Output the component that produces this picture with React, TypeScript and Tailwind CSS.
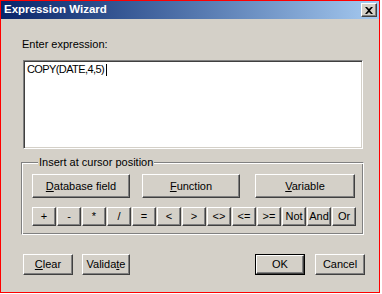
import React from 'react';

const font = { fontFamily: '"Liberation Sans", Arial, sans-serif' };

const bevel =
  'bg-[#d4d0c8] border border-t-white border-l-white border-r-[#404040] border-b-[#404040] shadow-[inset_-1px_-1px_0_#808080] text-black text-[11px] leading-none flex items-center justify-center';

const Btn: React.FC<{ className?: string; children: React.ReactNode }> = ({ className = '', children }) => (
  <div className={`${bevel} ${className}`}>{children}</div>
);

const OPS = ['+', '-', '*', '/', '=', '<', '>', '<>', '<=', '>=', 'Not', 'And', 'Or'];

export default function App() {
  return (
    <div className="w-[382px] h-[294px] bg-white" style={font}>
      <div className="w-[380px] h-[293px] border border-[#ff0000] bg-[#d4d0c8] flex flex-col">
        {/* title bar */}
        <div className="h-[18px] flex items-center justify-between bg-gradient-to-r from-[#0a246a] to-[#a6caf0] pl-[3px] pr-[2px]">
          <span className="text-white font-bold text-[11.5px] leading-none">Expression Wizard</span>
          <div className={`${bevel} w-[16px] h-[14px]`}>
            <svg width="8" height="7" viewBox="0 0 8 7">
              <path d="M0 0h2l2 2 2-2h2L5 3.5 8 7H6L4 5 2 7H0l3-3.5z" fill="black" />
            </svg>
          </div>
        </div>

        <div className="flex flex-col pl-[20px] pt-[19px]">
          <div className="ml-[1px] h-[13px] text-[11px] leading-[13px]">Enter expression:</div>

          <div className="ml-[2px] mt-[9px] w-[340px] h-[89px] bg-white border border-t-[#808080] border-l-[#808080] border-r-white border-b-white shadow-[inset_1px_1px_0_#404040,inset_-1px_-1px_0_#d4d0c8] px-[3px] pt-[2px]">
            <div className="flex items-center h-[13px] text-[11px] leading-[13px] tracking-[-0.6px]">
              COPY(DATE,4,5)
              <span className="ml-[2px] h-[12px] border-l border-black" />
            </div>
          </div>

          <fieldset className="mt-[7px] w-[343px] border border-t-[#808080] border-l-[#808080] border-r-white border-b-white shadow-[inset_1px_1px_0_white,inset_-1px_-1px_0_#808080] pl-[10px] pt-[5px] pb-[8px]">
            <legend className="ml-[6px] px-[1px] bg-[#d4d0c8] text-[11px] leading-[13px]">Insert at cursor position</legend>
            <div className="flex">
              <Btn className="w-[98px] h-[24px]"><span><u>D</u>atabase field</span></Btn>
              <Btn className="ml-[12px] w-[98px] h-[24px]"><span><u>F</u>unction</span></Btn>
              <Btn className="ml-[15px] w-[100px] h-[24px]"><span><u>V</u>ariable</span></Btn>
            </div>
            <div className="flex gap-[1px] mt-[9px]">
              {OPS.map(op => (
                <Btn key={op} className="w-[24px] h-[19px]">{op}</Btn>
              ))}
            </div>
          </fieldset>

          <div className="flex mt-[19px] ml-[2px]">
            <Btn className="w-[50px] h-[21px]"><span><u>C</u>lear</span></Btn>
            <Btn className="ml-[9px] w-[48px] h-[21px]"><span>Valida<u>t</u>e</span></Btn>
            <div className="ml-[125px] w-[50px] h-[21px] border border-black flex">
              <Btn className="flex-1">OK</Btn>
            </div>
            <Btn className="ml-[10px] w-[50px] h-[21px]">Cancel</Btn>
          </div>
        </div>
      </div>
    </div>
  );
}
